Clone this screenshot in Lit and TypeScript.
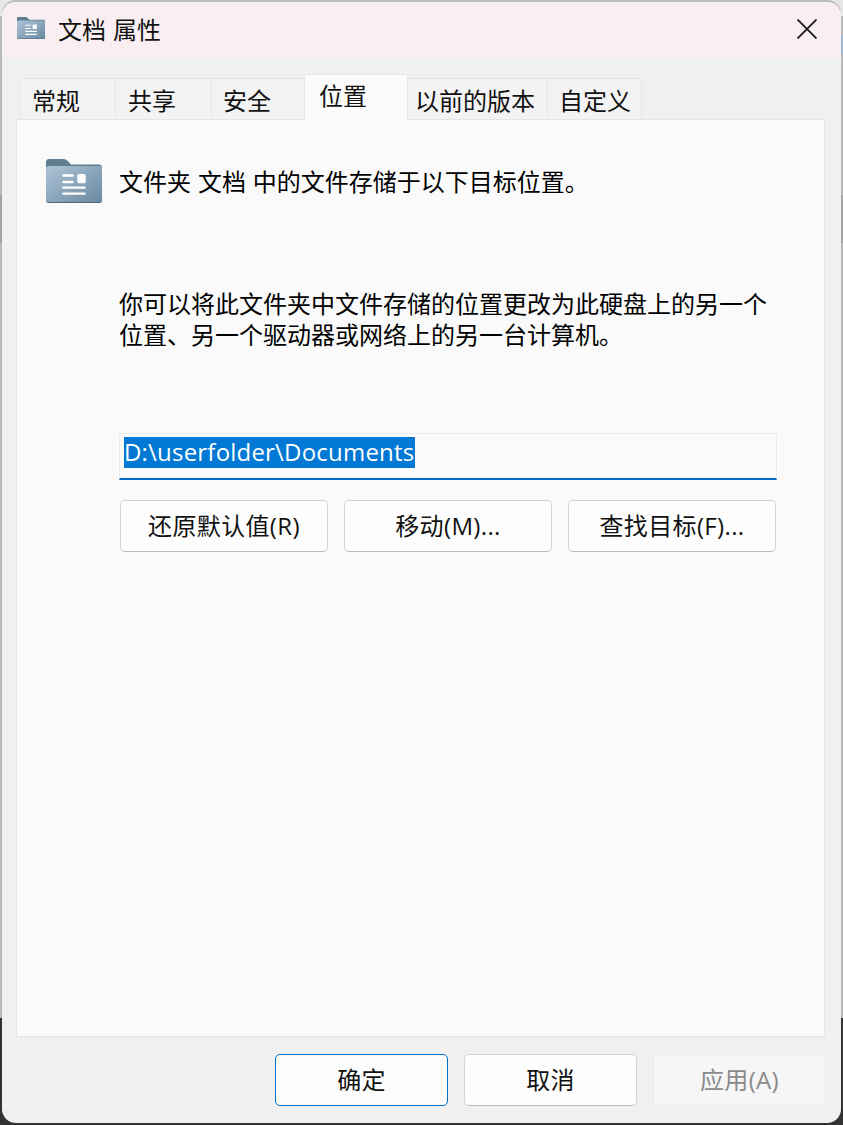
import { LitElement, html, css } from "lit";
import { customElement } from "lit/decorators.js";

const folder = (w: number, h: number, id: string) => html`<svg width=${w} height=${h} viewBox="0 0 56 44" class="folder">
  <defs>
    <linearGradient id=${id} x1="0" y1="0" x2="1" y2="1">
      <stop offset="0" stop-color="#aec4d8"/>
      <stop offset="1" stop-color="#68889f"/>
    </linearGradient>
  </defs>
  <path d="M3 0H17C19 0 20.500 .8 22 2.300L25 5.500H53C54.700 5.500 56 6.800 56 8.500V12H0V3C0 1.300 1.300 0 3 0Z" fill="#5f7f90"/>
  <rect x="0" y="7" width="56" height="37" rx="3" fill=${"url(#" + id + ")"}/>
  <path d="M0 41C0 42.700 1.300 43 3 43H53C54.700 43 56 42.700 56 41V41.500C56 43 55 44 53 44H3C1 44 0 43 0 41.500Z" fill="#4d6a80"/>
  <g fill="#fff">
    <rect x="16.300" y="15.300" width="11.400" height="2.400" rx=".8"/>
    <rect x="16.300" y="21.800" width="11.400" height="2.400" rx=".8"/>
    <rect x="31.300" y="15" width="8.400" height="9.200" rx="1.500"/>
    <rect x="16.300" y="27.400" width="23.400" height="2.400" rx=".8"/>
    <rect x="16.300" y="33.400" width="23.400" height="2.400" rx=".8"/>
  </g>
</svg>`;

@customElement("app-root")
export class AppRoot extends LitElement {
  static styles = css`
    :host {
      display: block;
      width: 843px;
      height: 1125px;
      overflow: hidden;
      font-family: "Open Sans", "Noto Sans CJK SC", sans-serif;
      color: #000;
      font-size: 24px;
    }
    .backdrop {
      height: 1125px;
      box-sizing: border-box;
      background:
        linear-gradient(#e6e6e6 0 16px, #b9b9b9 16px 35px, #9dbad2 35px 55px, #b9b9b9 55px 195px, #a3a3a3 195px 243px, #b9b9b9 243px 1018px, #333 1018px) right / 2px 100% no-repeat,
        linear-gradient(#e6e6e6 0 16px, #b9b9b9 16px 195px, #a3a3a3 195px 243px, #b9b9b9 243px 1018px, #333 1018px);
      padding: 2px;
    }
    .win {
      height: 1121px;
      border-radius: 14px;
      background: #f0f0f0;
      box-shadow: 0 -2px 0 0 #bdbdbd;
      overflow: hidden;
      display: flex;
      flex-direction: column;
    }
    .title {
      height: 56px;
      flex: none;
      background: #f9eff3;
      display: flex;
      align-items: center;
      padding: 0 15px;
      gap: 13px;
      color: #111;
    }
    .title svg { margin-top: -4px; }
    .title .t { flex: 1; line-height: 32px; word-spacing: .7px; }
    .title .close { display: block; margin-right: 9px; margin-top: -2px; }
    .tabs {
      display: flex;
      align-items: flex-end;
      height: 61px;
      flex: none;
      padding-left: 19px;
    }
    .tab {
      height: 41px;
      box-sizing: border-box;
      border: 1px solid #e5e5e5;
      border-bottom: none;
      background: #f3f3f3;
      line-height: 43px;
      white-space: nowrap;
      margin-left: -1px;
      color: #111;
    }
    .tab.active {
      height: 46px;
      background: #fbfbfb;
      position: relative;
      z-index: 1;
      line-height: 42px;
      margin-bottom: -1px;
      border-color: #e8e8e8;
    }
    .panel {
      height: 918px;
      flex: none;
      box-sizing: border-box;
      margin: 0 16px 0 14px;
      background: #fafafa;
      border: 1px solid #e5e5e5;
      padding: 38px 47px 0 29px;
    }
    .head {
      display: flex;
      align-items: center;
      gap: 17px;
      height: 46px;
    }
    .head .t { line-height: 36px; margin-top: 2px; word-spacing: .7px; }
    .desc {
      margin: 84px 0 0 73px;
      line-height: 31px;
      white-space: pre-line;
    }
    .field {
      margin: 83px 0 0 73px;
      height: 47px;
      box-sizing: border-box;
      border: 1px solid #e9ecef;
      border-bottom: 2px solid #0067c0;
      background: #fbfbfb;
      padding: 3px 0 0 4px;
    }
    .sel {
      display: block;
      width: max-content;
      background: #0078d4;
      color: #fff;
      height: 31px;
      line-height: 29px;
      padding-right: 1px;
      letter-spacing: .2px;
    }
    .btns {
      display: flex;
      gap: 16px;
      margin: 20px 0 0 74px;
    }
    .btn {
      box-sizing: border-box;
      height: 52px;
      border: 1px solid #d2d2d2;
      border-bottom-color: #bdbdbd;
      border-radius: 5px;
      background: #fdfdfd;
      display: flex;
      align-items: center;
      justify-content: center;
      padding-bottom: 3px;
      letter-spacing: .35px;
      color: #111;
    }
    .btns .btn { width: 208px; }
    .foot {
      flex: 1;
      display: flex;
      justify-content: flex-end;
      gap: 16px;
      padding: 17px 15px 0 0;
    }
    .foot .btn { width: 173px; }
    .btn.primary { border: 1px solid #0072cc; }
    .btn.off { border: 1px solid #ebebeb; background: #f6f6f6; color: #8a8a8a; }
  `;

  render() {
    const tabs: [string, number, number, boolean?][] = [
      ["常规", 96, 11],
      ["共享", 97, 12],
      ["安全", 94, 11],
      ["位置", 104, 14, true],
      ["以前的版本", 141, 7],
      ["自定义", 95, 11],
    ];
    return html`<div class="backdrop"><div class="win">
      <div class="title">
        ${folder(28, 22, "g1")}
        <span class="t">文档 属性</span>
        <svg class="close" width="20" height="20" viewBox="0 0 20 20">
          <path d="M.5 .5L19.500 19.500M19.500 .5L.5 19.500" stroke="#1a1a1a" stroke-width="1.800" fill="none"/>
        </svg>
      </div>
      <div class="tabs">
        ${tabs.map(([t, w, p, a]) => html`<div class=${a ? "tab active" : "tab"} style="width:${w}px;padding-left:${p}px">${t}</div>`)}
      </div>
      <div class="panel">
        <div class="head">
          ${folder(56, 44, "g2")}
          <span class="t">文件夹 文档 中的文件存储于以下目标位置。</span>
        </div>
        <div class="desc">你可以将此文件夹中文件存储的位置更改为此硬盘上的另一个
位置、另一个驱动器或网络上的另一台计算机。</div>
        <div class="field"><span class="sel">D:\\userfolder\\Documents</span></div>
        <div class="btns">
          <div class="btn">还原默认值(R)</div>
          <div class="btn">移动(M)...</div>
          <div class="btn">查找目标(F)...</div>
        </div>
      </div>
      <div class="foot">
        <div class="btn primary">确定</div>
        <div class="btn">取消</div>
        <div class="btn off">应用(A)</div>
      </div>
    </div></div>`;
  }
}
